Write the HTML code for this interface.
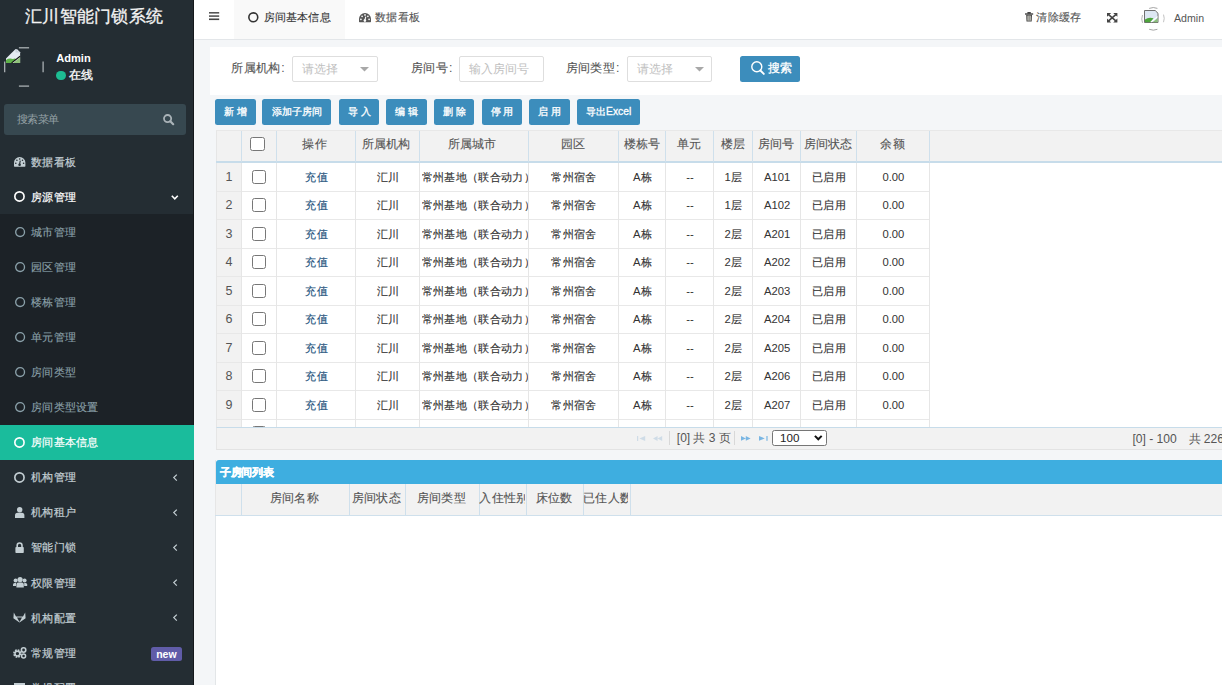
<!DOCTYPE html><html><head><meta charset="utf-8"><style>
*{box-sizing:border-box;margin:0;padding:0}
html,body{width:1222px;height:685px;overflow:hidden}
body{position:relative;background:#f4f6f8;font-family:"Liberation Sans",sans-serif;color:#333}
.a{position:absolute;white-space:nowrap}
.r{position:absolute}
</style></head><body>
<div class="r" style="left:0;top:0;width:194px;height:685px;background:#242d33"></div>
<div class="r" style="left:193px;top:0;width:1px;height:685px;background:#15191c"></div>
<div class="a" style="left:25.2px;top:3.00px;height:27.6px;line-height:27.6px;font-size:17.25px;color:#f4f4f4;font-weight:normal;letter-spacing:0.25px;-webkit-text-stroke:0.3px #f4f4f4;">汇川智能门锁系统</div>
<svg style="position:absolute;left:4px;top:47px;overflow:visible" width="40" height="40" viewBox="0 0 40 40"><path d="M14.9 0.8 L25.1 0.8" fill="none" stroke="#b4babd" stroke-width="1.2"/>
<path d="M14.9 39.1 L25.1 39.1" fill="none" stroke="#b4babd" stroke-width="1.2"/>
<path d="M0.7 14.6 L0.7 25.2" fill="none" stroke="#b4babd" stroke-width="1.2"/>
<path d="M39.1 14.6 L39.1 25.2" fill="none" stroke="#b4babd" stroke-width="1.2"/>
<path d="M2 15.9 L2 11.5 L11.3 2.2 L13.2 2.2 L16.1 5.2 L16.1 15.9 Z" fill="#e4ebf2"/>
<path d="M11.3 2.2 L11.6 5.4 L16.1 5.4" fill="#c9d3dc"/>
<path d="M2 15.9 L2 13 Q5 10.8 9 12 Q11 11 12.5 12.4 L8 15.9 Z" fill="#5fb24a"/>
<path d="M9 15.9 L16.1 10.5 L16.1 15.9 Z" fill="#8fc27a"/>
<path d="M7.6 15.9 L16.1 9.2" stroke="#111" stroke-width="1.1"/></svg>
<div class="a" style="left:56.2px;top:49.72px;height:17.76px;line-height:17.76px;font-size:11.1px;color:#ffffff;font-weight:bold;">Admin</div>
<div class="r" style="left:56.2px;top:70.8px;width:9.6px;height:9.6px;border-radius:50%;background:#1dbd93"></div>
<div class="a" style="left:68.6px;top:66.32px;height:18.56px;line-height:18.56px;font-size:11.6px;color:#ffffff;font-weight:normal;-webkit-text-stroke:0.3px #fff;">在线</div>
<div class="r" style="left:4px;top:104px;width:181.5px;height:31.3px;background:#374850;border-radius:3px"></div>
<div class="a" style="left:16.8px;top:111.20px;height:16.8px;line-height:16.8px;font-size:10.5px;color:#96a2a7;font-weight:normal;letter-spacing:-0.5px;">搜索菜单</div>
<svg style="position:absolute;left:163.4px;top:113.5px;overflow:visible" width="11" height="11" viewBox="0 0 11 11"><circle cx="4.6" cy="4.6" r="3.6" fill="none" stroke="#aab3b8" stroke-width="1.8"/><path d="M7.3 7.3 L10.2 10.2" stroke="#aab3b8" stroke-width="2.2" stroke-linecap="round"/></svg>
<div class="a" style="left:31.2px;top:152.60px;height:18.0px;line-height:18.0px;font-size:11.25px;color:#c3ced3;font-weight:normal;letter-spacing:0.25px;-webkit-text-stroke:0.2px #c3ced3;">数据看板</div>
<svg style="position:absolute;left:13.8px;top:156.9px;overflow:visible" width="11.4" height="9.7" viewBox="0 0 11.4 9.7"><path d="M0.6 9.7 Q0 9.7 0 9 L0 5.7 A5.7 5.7 0 0 1 11.4 5.7 L11.4 9 Q11.4 9.7 10.8 9.7 Z" fill="#c3ced3"/><circle cx="1.8" cy="6.2" r="0.8" fill="#242d33"/><circle cx="2.9" cy="3.3" r="0.8" fill="#242d33"/><circle cx="5.7" cy="2.0" r="0.8" fill="#242d33"/><circle cx="8.5" cy="3.3" r="0.8" fill="#242d33"/><circle cx="9.6" cy="6.2" r="0.8" fill="#242d33"/><path d="M5.5 7.6 L6.3 3.6" stroke="#242d33" stroke-width="1.1"/><circle cx="5.6" cy="7.7" r="1.3" fill="#242d33"/></svg>
<div class="a" style="left:31.2px;top:187.68px;height:18.0px;line-height:18.0px;font-size:11.25px;color:#ffffff;font-weight:normal;letter-spacing:0.25px;-webkit-text-stroke:0.2px #ffffff;">房源管理</div>
<svg style="position:absolute;left:14.0px;top:191.23000000000002px;overflow:visible" width="10.9" height="10.9" viewBox="0 0 10.9 10.9"><circle cx="5.45" cy="5.45" r="4.625" fill="none" stroke="#ffffff" stroke-width="1.65"/></svg>
<svg style="position:absolute;left:170.8px;top:195.08px;overflow:visible" width="7.6" height="4.8" viewBox="0 0 7.6 4.8"><path d="M0.8 0.8 L3.8 3.8 L6.8 0.8" fill="none" stroke="#ffffff" stroke-width="1.6"/></svg>
<div class="r" style="left:0;top:214.22px;width:193px;height:35.08px;background:#1c2227"></div>
<div class="a" style="left:31.2px;top:222.76px;height:18.0px;line-height:18.0px;font-size:11.25px;color:#8aa0a9;font-weight:normal;letter-spacing:0.25px;-webkit-text-stroke:0.12px #8aa0a9;">城市管理</div>
<svg style="position:absolute;left:15.1px;top:226.66px;overflow:visible" width="10.2" height="10.2" viewBox="0 0 10.2 10.2"><circle cx="5.1" cy="5.1" r="4.425" fill="none" stroke="#8aa0a9" stroke-width="1.35"/></svg>
<div class="r" style="left:0;top:249.30px;width:193px;height:35.08px;background:#1c2227"></div>
<div class="a" style="left:31.2px;top:257.84px;height:18.0px;line-height:18.0px;font-size:11.25px;color:#8aa0a9;font-weight:normal;letter-spacing:0.25px;-webkit-text-stroke:0.12px #8aa0a9;">园区管理</div>
<svg style="position:absolute;left:15.1px;top:261.73999999999995px;overflow:visible" width="10.2" height="10.2" viewBox="0 0 10.2 10.2"><circle cx="5.1" cy="5.1" r="4.425" fill="none" stroke="#8aa0a9" stroke-width="1.35"/></svg>
<div class="r" style="left:0;top:284.38px;width:193px;height:35.08px;background:#1c2227"></div>
<div class="a" style="left:31.2px;top:292.92px;height:18.0px;line-height:18.0px;font-size:11.25px;color:#8aa0a9;font-weight:normal;letter-spacing:0.25px;-webkit-text-stroke:0.12px #8aa0a9;">楼栋管理</div>
<svg style="position:absolute;left:15.1px;top:296.81999999999994px;overflow:visible" width="10.2" height="10.2" viewBox="0 0 10.2 10.2"><circle cx="5.1" cy="5.1" r="4.425" fill="none" stroke="#8aa0a9" stroke-width="1.35"/></svg>
<div class="r" style="left:0;top:319.46px;width:193px;height:35.08px;background:#1c2227"></div>
<div class="a" style="left:31.2px;top:328.00px;height:18.0px;line-height:18.0px;font-size:11.25px;color:#8aa0a9;font-weight:normal;letter-spacing:0.25px;-webkit-text-stroke:0.12px #8aa0a9;">单元管理</div>
<svg style="position:absolute;left:15.1px;top:331.9px;overflow:visible" width="10.2" height="10.2" viewBox="0 0 10.2 10.2"><circle cx="5.1" cy="5.1" r="4.425" fill="none" stroke="#8aa0a9" stroke-width="1.35"/></svg>
<div class="r" style="left:0;top:354.54px;width:193px;height:35.08px;background:#1c2227"></div>
<div class="a" style="left:31.2px;top:363.08px;height:18.0px;line-height:18.0px;font-size:11.25px;color:#8aa0a9;font-weight:normal;letter-spacing:0.25px;-webkit-text-stroke:0.12px #8aa0a9;">房间类型</div>
<svg style="position:absolute;left:15.1px;top:366.97999999999996px;overflow:visible" width="10.2" height="10.2" viewBox="0 0 10.2 10.2"><circle cx="5.1" cy="5.1" r="4.425" fill="none" stroke="#8aa0a9" stroke-width="1.35"/></svg>
<div class="r" style="left:0;top:389.62px;width:193px;height:35.08px;background:#1c2227"></div>
<div class="a" style="left:31.2px;top:398.16px;height:18.0px;line-height:18.0px;font-size:11.25px;color:#8aa0a9;font-weight:normal;letter-spacing:0.25px;-webkit-text-stroke:0.12px #8aa0a9;">房间类型设置</div>
<svg style="position:absolute;left:15.1px;top:402.05999999999995px;overflow:visible" width="10.2" height="10.2" viewBox="0 0 10.2 10.2"><circle cx="5.1" cy="5.1" r="4.425" fill="none" stroke="#8aa0a9" stroke-width="1.35"/></svg>
<div class="r" style="left:0;top:424.70px;width:194px;height:35.08px;background:#1abc9c"></div>
<div class="a" style="left:31.2px;top:433.24px;height:18.0px;line-height:18.0px;font-size:11.25px;color:#ffffff;font-weight:normal;letter-spacing:0.25px;-webkit-text-stroke:0.2px #ffffff;">房间基本信息</div>
<svg style="position:absolute;left:14.0px;top:436.79px;overflow:visible" width="10.9" height="10.9" viewBox="0 0 10.9 10.9"><circle cx="5.45" cy="5.45" r="4.625" fill="none" stroke="#ffffff" stroke-width="1.65"/></svg>
<div class="a" style="left:31.2px;top:468.32px;height:18.0px;line-height:18.0px;font-size:11.25px;color:#c3ced3;font-weight:normal;letter-spacing:0.25px;-webkit-text-stroke:0.2px #c3ced3;">机构管理</div>
<svg style="position:absolute;left:14.0px;top:471.86999999999995px;overflow:visible" width="10.9" height="10.9" viewBox="0 0 10.9 10.9"><circle cx="5.45" cy="5.45" r="4.625" fill="none" stroke="#c3ced3" stroke-width="1.65"/></svg>
<svg style="position:absolute;left:173.2px;top:473.91999999999996px;overflow:visible" width="4.4" height="7.2" viewBox="0 0 4.4 7.2"><path d="M3.8 0.6 L0.8 3.6 L3.8 6.6" fill="none" stroke="#c3ced3" stroke-width="1.25"/></svg>
<div class="a" style="left:31.2px;top:503.40px;height:18.0px;line-height:18.0px;font-size:11.25px;color:#c3ced3;font-weight:normal;letter-spacing:0.25px;-webkit-text-stroke:0.2px #c3ced3;">机构租户</div>
<svg style="position:absolute;left:14.8px;top:506.79999999999995px;overflow:visible" width="9.4" height="11" viewBox="0 0 9.4 11"><circle cx="4.7" cy="2.8" r="2.7" fill="#c3ced3"/><path d="M0 11 L0 8.4 Q0 5.8 2.6 5.8 L6.8 5.8 Q9.4 5.8 9.4 8.4 L9.4 11 Z" fill="#c3ced3"/></svg>
<svg style="position:absolute;left:173.2px;top:509.0px;overflow:visible" width="4.4" height="7.2" viewBox="0 0 4.4 7.2"><path d="M3.8 0.6 L0.8 3.6 L3.8 6.6" fill="none" stroke="#c3ced3" stroke-width="1.25"/></svg>
<div class="a" style="left:31.2px;top:538.48px;height:18.0px;line-height:18.0px;font-size:11.25px;color:#c3ced3;font-weight:normal;letter-spacing:0.25px;-webkit-text-stroke:0.2px #c3ced3;">智能门锁</div>
<svg style="position:absolute;left:15px;top:541.88px;overflow:visible" width="9.2" height="11" viewBox="0 0 9.2 11"><path d="M2.2 5 L2.2 3.4 A2.4 2.4 0 0 1 7 3.4 L7 5" fill="none" stroke="#c3ced3" stroke-width="1.6"/><rect x="0.4" y="5" width="8.4" height="6" rx="0.8" fill="#c3ced3"/></svg>
<svg style="position:absolute;left:173.2px;top:544.08px;overflow:visible" width="4.4" height="7.2" viewBox="0 0 4.4 7.2"><path d="M3.8 0.6 L0.8 3.6 L3.8 6.6" fill="none" stroke="#c3ced3" stroke-width="1.25"/></svg>
<div class="a" style="left:31.2px;top:573.56px;height:18.0px;line-height:18.0px;font-size:11.25px;color:#c3ced3;font-weight:normal;letter-spacing:0.25px;-webkit-text-stroke:0.2px #c3ced3;">权限管理</div>
<svg style="position:absolute;left:12.6px;top:577.16px;overflow:visible" width="14.2" height="10.6" viewBox="0 0 14.2 10.6"><circle cx="7.1" cy="2.6" r="2.6" fill="#c3ced3"/><path d="M3.4 10.6 L3.4 7.6 Q3.4 5.6 5.4 5.6 L8.8 5.6 Q10.8 5.6 10.8 7.6 L10.8 10.6 Z" fill="#c3ced3"/><circle cx="2.6" cy="3.6" r="2" fill="#c3ced3"/><circle cx="11.6" cy="3.6" r="2" fill="#c3ced3"/><path d="M0 9 L0 7.6 Q0 6 1.6 6 L3 6 L3 9 Z" fill="#c3ced3"/><path d="M14.2 9 L14.2 7.6 Q14.2 6 12.6 6 L11.2 6 L11.2 9 Z" fill="#c3ced3"/></svg>
<svg style="position:absolute;left:173.2px;top:579.16px;overflow:visible" width="4.4" height="7.2" viewBox="0 0 4.4 7.2"><path d="M3.8 0.6 L0.8 3.6 L3.8 6.6" fill="none" stroke="#c3ced3" stroke-width="1.25"/></svg>
<div class="a" style="left:31.2px;top:608.64px;height:18.0px;line-height:18.0px;font-size:11.25px;color:#c3ced3;font-weight:normal;letter-spacing:0.25px;-webkit-text-stroke:0.2px #c3ced3;">机构配置</div>
<svg style="position:absolute;left:12.8px;top:612.24px;overflow:visible" width="13" height="10.8" viewBox="0 0 13 10.8"><path d="M6.5 10.6 L0.4 6.2 L0.8 0.6 L3 4.6 L10 4.6 L12.2 0.6 L12.6 6.2 Z" fill="#c3ced3"/><path d="M6.5 10 L4 5.4 L9 5.4 Z" fill="#242d33"/></svg>
<svg style="position:absolute;left:173.2px;top:614.24px;overflow:visible" width="4.4" height="7.2" viewBox="0 0 4.4 7.2"><path d="M3.8 0.6 L0.8 3.6 L3.8 6.6" fill="none" stroke="#c3ced3" stroke-width="1.25"/></svg>
<div class="a" style="left:31.2px;top:643.72px;height:18.0px;line-height:18.0px;font-size:11.25px;color:#c3ced3;font-weight:normal;letter-spacing:0.25px;-webkit-text-stroke:0.2px #c3ced3;">常规管理</div>
<svg style="position:absolute;left:12.8px;top:646.9200000000001px;overflow:visible" width="13.6" height="11.4" viewBox="0 0 13.6 11.4"><circle cx="4.4" cy="6.6" r="3.2" fill="none" stroke="#c3ced3" stroke-width="2.2" stroke-dasharray="1.6 0.9"/><circle cx="4.4" cy="6.6" r="2.4" fill="none" stroke="#c3ced3" stroke-width="1.4"/><circle cx="10.6" cy="3" r="2.2" fill="none" stroke="#c3ced3" stroke-width="1.6"/><circle cx="10.6" cy="9" r="2" fill="none" stroke="#c3ced3" stroke-width="1.5"/></svg>
<div class="r" style="left:151.2px;top:646.92px;width:30.4px;height:14px;border-radius:2.5px;background:#605ca8;color:#fff;font-size:10.5px;font-weight:bold;line-height:14px;text-align:center">new</div>
<div class="a" style="left:31.2px;top:678.80px;height:18.0px;line-height:18.0px;font-size:11.25px;color:#c3ced3;font-weight:normal;letter-spacing:0.25px;-webkit-text-stroke:0.2px #c3ced3;">常规配置</div>
<svg style="position:absolute;left:14px;top:682.8px;overflow:visible" width="11" height="10" viewBox="0 0 11 10"><rect x="0" y="0" width="11" height="10" fill="#c3ced3"/></svg>
<div class="r" style="left:194px;top:0;width:1028px;height:39px;background:#fff"></div>
<div class="r" style="left:194px;top:39px;width:1028px;height:1px;background:#e3e6e9"></div>
<svg style="position:absolute;left:209px;top:12.1px;overflow:visible" width="10.2" height="8.2" viewBox="0 0 10.2 8.2"><rect x="0" y="0" width="10.2" height="1.6" fill="#555"/><rect x="0" y="3.3" width="10.2" height="1.6" fill="#555"/><rect x="0" y="6.5" width="10.2" height="1.6" fill="#444"/></svg>
<div class="r" style="left:234.4px;top:0;width:110.3px;height:39px;background:#f9f9f9"></div>
<svg style="position:absolute;left:248.2px;top:11.9px;overflow:visible" width="10.6" height="10.6" viewBox="0 0 10.6 10.6"><circle cx="5.3" cy="5.3" r="4.45" fill="none" stroke="#333" stroke-width="1.6"/></svg>
<div class="a" style="left:263.6px;top:7.60px;height:18.0px;line-height:18.0px;font-size:11.25px;color:#333;font-weight:normal;letter-spacing:0.2px;"><span style="-webkit-text-stroke:0.12px currentColor">房间基本信息</span></div>
<svg style="position:absolute;left:359.2px;top:12.8px;overflow:visible" width="12" height="9.2" viewBox="0 0 12 9.2"><path d="M0.6 9.2 Q0 9.2 0 8.6 L0 6 A6 6 0 0 1 12 6 L12 8.6 Q12 9.2 11.4 9.2 Z" fill="#555"/><circle cx="1.9" cy="6.3" r="0.85" fill="#fff"/><circle cx="3.1" cy="3.3" r="0.85" fill="#fff"/><circle cx="6" cy="1.9" r="0.85" fill="#fff"/><circle cx="8.9" cy="3.3" r="0.85" fill="#fff"/><circle cx="10.1" cy="6.3" r="0.85" fill="#fff"/><path d="M5.8 7.4 L6.8 3.6" stroke="#fff" stroke-width="1.1"/><circle cx="5.9" cy="7.6" r="1.3" fill="#fff"/></svg>
<div class="a" style="left:375.2px;top:7.80px;height:18.0px;line-height:18.0px;font-size:11.25px;color:#555;font-weight:normal;letter-spacing:0.25px;"><span style="-webkit-text-stroke:0.12px currentColor">数据看板</span></div>
<svg style="position:absolute;left:1024.5px;top:12.2px;overflow:visible" width="8.2" height="9.6" viewBox="0 0 8.2 9.6"><rect x="0" y="1.3" width="8.2" height="1.4" fill="#444"/><rect x="2.4" y="0" width="3.4" height="1.8" fill="#444"/><path d="M1.2 2.7 L1.5 9.6 L6.7 9.6 L7 2.7 Z" fill="#444"/><rect x="2.4" y="3.6" width="3.4" height="5.1" fill="#c9c9c0"/><rect x="3.7" y="3.6" width="0.8" height="5.1" fill="#666"/></svg>
<div class="a" style="left:1036.4px;top:7.80px;height:18.0px;line-height:18.0px;font-size:11.25px;color:#555;font-weight:normal;letter-spacing:0.22px;"><span style="-webkit-text-stroke:0.12px currentColor">清除缓存</span></div>
<svg style="position:absolute;left:1106.9px;top:12.7px;overflow:visible" width="10.4" height="9.4" viewBox="0 0 10.4 9.4"><path d="M1.6 1.6 L8.8 7.8 M8.8 1.6 L1.6 7.8" stroke="#444" stroke-width="1.6"/><path d="M0 0 L4.2 0 L0 3.8 Z M10.4 0 L6.2 0 L10.4 3.8 Z M0 9.4 L4.2 9.4 L0 5.6 Z M10.4 9.4 L6.2 9.4 L10.4 5.6 Z" fill="#444"/></svg>
<svg style="position:absolute;left:1142px;top:8px;overflow:visible" width="22" height="22" viewBox="0 0 22 22"><path d="M7.2 0.4 A10.5 10.5 0 0 1 15.4 0.4" fill="none" stroke="#9a9a9a" stroke-width="0.9"/>
<path d="M7.2 21.3 A10.5 10.5 0 0 0 15.4 21.3" fill="none" stroke="#9a9a9a" stroke-width="0.9"/>
<path d="M0.5 7 A10.5 10.5 0 0 0 0.5 14.8" fill="none" stroke="#aaa" stroke-width="0.9"/>
<path d="M21.5 6.6 A10.5 10.5 0 0 1 21.5 14.2" fill="none" stroke="#bbb" stroke-width="0.9"/>
<path d="M2.5 2.5 L13.2 2.5 L16 5.3 L16 14.5 L2.5 14.5 Z" fill="#dde7f3" stroke="#6f6f6f" stroke-width="1"/>
<path d="M3 14.2 L3 11.5 Q6.5 8.8 11.5 10.2 L8.5 14.2 Z" fill="#4ea53c"/>
<path d="M8.8 14.2 L15.6 8.6" stroke="#fff" stroke-width="1.1"/>
<path d="M10.5 14.2 L15.6 10.2 L15.6 14.2 Z" fill="#8bbf7a"/></svg>
<div class="a" style="left:1174px;top:9.62px;height:16.96px;line-height:16.96px;font-size:10.6px;color:#555;font-weight:normal;">Admin</div>
<div class="r" style="left:210px;top:47px;width:1012px;height:48px;background:#fff"></div>
<div class="a" style="left:231.3px;top:59.44px;height:19.52px;line-height:19.52px;font-size:12.2px;color:#555;font-weight:normal;letter-spacing:0.25px;"><span style="-webkit-text-stroke:0.12px currentColor">所属机构</span><span style="margin-left:1px">:</span></div>
<div class="r" style="left:292.2px;top:56.3px;width:85.5px;height:25.3px;border:1px solid #dedede;border-radius:2px;background:#fff"></div>
<div class="a" style="left:301.59999999999997px;top:59.64px;height:18.72px;line-height:18.72px;font-size:11.7px;color:#c0c0c0;font-weight:normal;">请选择</div>
<svg style="position:absolute;left:360.3px;top:67.0px;overflow:visible" width="9" height="4.6" viewBox="0 0 9 4.6"><path d="M0 0 L9 0 L4.5 4.6 Z" fill="#a8a8a8"/></svg>
<div class="a" style="left:411.2px;top:59.44px;height:19.52px;line-height:19.52px;font-size:12.2px;color:#555;font-weight:normal;letter-spacing:0.25px;"><span style="-webkit-text-stroke:0.12px currentColor">房间号</span><span style="margin-left:1px">:</span></div>
<div class="r" style="left:459.4px;top:56.3px;width:85.0px;height:25.3px;border:1px solid #dedede;border-radius:2px;background:#fff"></div>
<div class="a" style="left:468.79999999999995px;top:59.64px;height:18.72px;line-height:18.72px;font-size:11.7px;color:#c0c0c0;font-weight:normal;">输入房间号</div>
<div class="a" style="left:565.9px;top:59.44px;height:19.52px;line-height:19.52px;font-size:12.2px;color:#555;font-weight:normal;letter-spacing:0.25px;"><span style="-webkit-text-stroke:0.12px currentColor">房间类型</span><span style="margin-left:1px">:</span></div>
<div class="r" style="left:627.1px;top:56.3px;width:85.39999999999998px;height:25.3px;border:1px solid #dedede;border-radius:2px;background:#fff"></div>
<div class="a" style="left:636.5px;top:59.64px;height:18.72px;line-height:18.72px;font-size:11.7px;color:#c0c0c0;font-weight:normal;">请选择</div>
<svg style="position:absolute;left:695.1px;top:67.0px;overflow:visible" width="9" height="4.6" viewBox="0 0 9 4.6"><path d="M0 0 L9 0 L4.5 4.6 Z" fill="#a8a8a8"/></svg>
<div class="r" style="left:740px;top:56.2px;width:60.2px;height:25.4px;background:#3c8dbc;border-radius:2.5px"></div>
<svg style="position:absolute;left:750.5px;top:61px;overflow:visible" width="14" height="15" viewBox="0 0 14 15"><circle cx="5.8" cy="5.7" r="5.0" fill="none" stroke="#fff" stroke-width="1.4"/><path d="M9.4 9.5 L12.8 12.9" stroke="#fff" stroke-width="1.9" stroke-linecap="round"/></svg>
<div class="a" style="left:768.3px;top:58.56px;height:19.68px;line-height:19.68px;font-size:12.3px;color:#fff;font-weight:normal;-webkit-text-stroke:0.3px #fff;">搜索</div>
<div class="r" style="left:215.2px;top:99.3px;width:40.5px;height:25.4px;background:#3c8dbc;border-radius:2.5px;color:#fff;font-size:10.3px;-webkit-text-stroke:0.3px #fff;line-height:25.4px;text-align:center;white-space:nowrap">新 增</div>
<div class="r" style="left:262.2px;top:99.3px;width:69.2px;height:25.4px;background:#3c8dbc;border-radius:2.5px;color:#fff;font-size:10.3px;-webkit-text-stroke:0.3px #fff;line-height:25.4px;text-align:center;white-space:nowrap">添加子房间</div>
<div class="r" style="left:339px;top:99.3px;width:40.2px;height:25.4px;background:#3c8dbc;border-radius:2.5px;color:#fff;font-size:10.3px;-webkit-text-stroke:0.3px #fff;line-height:25.4px;text-align:center;white-space:nowrap">导 入</div>
<div class="r" style="left:386px;top:99.3px;width:40.8px;height:25.4px;background:#3c8dbc;border-radius:2.5px;color:#fff;font-size:10.3px;-webkit-text-stroke:0.3px #fff;line-height:25.4px;text-align:center;white-space:nowrap">编 辑</div>
<div class="r" style="left:434px;top:99.3px;width:40.3px;height:25.4px;background:#3c8dbc;border-radius:2.5px;color:#fff;font-size:10.3px;-webkit-text-stroke:0.3px #fff;line-height:25.4px;text-align:center;white-space:nowrap">删 除</div>
<div class="r" style="left:481.9px;top:99.3px;width:40.3px;height:25.4px;background:#3c8dbc;border-radius:2.5px;color:#fff;font-size:10.3px;-webkit-text-stroke:0.3px #fff;line-height:25.4px;text-align:center;white-space:nowrap">停 用</div>
<div class="r" style="left:529px;top:99.3px;width:41.0px;height:25.4px;background:#3c8dbc;border-radius:2.5px;color:#fff;font-size:10.3px;-webkit-text-stroke:0.3px #fff;line-height:25.4px;text-align:center;white-space:nowrap">启 用</div>
<div class="r" style="left:577px;top:99.3px;width:63.3px;height:25.4px;background:#3c8dbc;border-radius:2.5px;color:#fff;font-size:10.3px;-webkit-text-stroke:0.3px #fff;line-height:25.4px;text-align:center;white-space:nowrap">导出Excel</div>
<div class="r" style="left:215.6px;top:130px;width:1006.4px;height:297.5px;background:#fff;border-left:1px solid #e6e6e6"></div>
<div class="r" style="left:215.6px;top:130px;width:1006.4px;height:32.5px;background:#f2f2f2;border-top:1px solid #e8e8e8;border-left:1px solid #e6e6e6"></div>
<div class="r" style="left:215.6px;top:161.3px;width:1006.4px;height:1.3px;background:#c7dcea"></div>
<div class="r" style="left:216.6px;top:162.6px;width:24.8px;height:265px;background:#f2f2f2"></div>
<div class="r" style="left:240.9px;top:131px;width:1px;height:30.5px;background:#cfe0ec"></div>
<div class="r" style="left:276.0px;top:131px;width:1px;height:30.5px;background:#cfe0ec"></div>
<div class="r" style="left:355.1px;top:131px;width:1px;height:30.5px;background:#cfe0ec"></div>
<div class="r" style="left:419.2px;top:131px;width:1px;height:30.5px;background:#cfe0ec"></div>
<div class="r" style="left:527.5px;top:131px;width:1px;height:30.5px;background:#cfe0ec"></div>
<div class="r" style="left:618.2px;top:131px;width:1px;height:30.5px;background:#cfe0ec"></div>
<div class="r" style="left:664.9px;top:131px;width:1px;height:30.5px;background:#cfe0ec"></div>
<div class="r" style="left:712.9px;top:131px;width:1px;height:30.5px;background:#cfe0ec"></div>
<div class="r" style="left:752.1px;top:131px;width:1px;height:30.5px;background:#cfe0ec"></div>
<div class="r" style="left:800.1px;top:131px;width:1px;height:30.5px;background:#cfe0ec"></div>
<div class="r" style="left:855.8px;top:131px;width:1px;height:30.5px;background:#cfe0ec"></div>
<div class="r" style="left:929.1px;top:131px;width:1px;height:30.5px;background:#cfe0ec"></div>
<div class="a" style="left:275.0px;top:135.14px;height:19.52px;line-height:19.52px;font-size:12.2px;color:#555;font-weight:normal;width:79.10000000000002px;letter-spacing:0.15px;text-align:center;overflow:hidden;"><span style="-webkit-text-stroke:0.12px currentColor">操作</span></div>
<div class="a" style="left:354.1px;top:135.14px;height:19.52px;line-height:19.52px;font-size:12.2px;color:#555;font-weight:normal;width:64.09999999999997px;letter-spacing:0.15px;text-align:center;overflow:hidden;"><span style="-webkit-text-stroke:0.12px currentColor">所属机构</span></div>
<div class="a" style="left:418.2px;top:135.14px;height:19.52px;line-height:19.52px;font-size:12.2px;color:#555;font-weight:normal;width:108.30000000000001px;letter-spacing:0.15px;text-align:center;overflow:hidden;"><span style="-webkit-text-stroke:0.12px currentColor">所属城市</span></div>
<div class="a" style="left:527.7px;top:135.14px;height:19.52px;line-height:19.52px;font-size:12.2px;color:#555;font-weight:normal;width:90.70000000000005px;letter-spacing:0.15px;text-align:center;overflow:hidden;"><span style="-webkit-text-stroke:0.12px currentColor">园区</span></div>
<div class="a" style="left:618.4000000000001px;top:135.14px;height:19.52px;line-height:19.52px;font-size:12.2px;color:#555;font-weight:normal;width:46.69999999999993px;letter-spacing:0.15px;text-align:center;overflow:hidden;"><span style="-webkit-text-stroke:0.12px currentColor">楼栋号</span></div>
<div class="a" style="left:665.1px;top:135.14px;height:19.52px;line-height:19.52px;font-size:12.2px;color:#555;font-weight:normal;width:48.0px;letter-spacing:0.15px;text-align:center;overflow:hidden;"><span style="-webkit-text-stroke:0.12px currentColor">单元</span></div>
<div class="a" style="left:713.1px;top:135.14px;height:19.52px;line-height:19.52px;font-size:12.2px;color:#555;font-weight:normal;width:39.200000000000045px;letter-spacing:0.15px;text-align:center;overflow:hidden;"><span style="-webkit-text-stroke:0.12px currentColor">楼层</span></div>
<div class="a" style="left:752.3000000000001px;top:135.14px;height:19.52px;line-height:19.52px;font-size:12.2px;color:#555;font-weight:normal;width:48.0px;letter-spacing:0.15px;text-align:center;overflow:hidden;"><span style="-webkit-text-stroke:0.12px currentColor">房间号</span></div>
<div class="a" style="left:800.3000000000001px;top:135.14px;height:19.52px;line-height:19.52px;font-size:12.2px;color:#555;font-weight:normal;width:55.69999999999993px;letter-spacing:0.15px;text-align:center;overflow:hidden;"><span style="-webkit-text-stroke:0.12px currentColor">房间状态</span></div>
<div class="a" style="left:856.0px;top:135.14px;height:19.52px;line-height:19.52px;font-size:12.2px;color:#555;font-weight:normal;width:73.30000000000007px;letter-spacing:0.15px;text-align:center;overflow:hidden;"><span style="-webkit-text-stroke:0.12px currentColor">余额</span></div>
<div class="r" style="left:250.3px;top:136.6px;width:14.4px;height:14.4px;border:1px solid #777;border-radius:2.5px;background:#fff"></div>
<div class="r" style="left:216.6px;top:190.50px;width:713.0px;height:1px;background:#e8e8e8"></div>
<div class="r" style="left:252px;top:169.55px;width:14.4px;height:14.4px;border:1px solid #777;border-radius:2.5px;background:#fff"></div>
<div class="a" style="left:215.6px;top:166.75px;height:20.0px;line-height:20.0px;font-size:12.5px;color:#555;font-weight:normal;width:26.80000000000001px;text-align:center;">1</div>
<div class="a" style="left:277.5px;top:167.75px;height:18.0px;line-height:18.0px;font-size:11.25px;color:#23527c;font-weight:normal;width:78.10000000000002px;letter-spacing:0.25px;text-align:center;overflow:hidden;"><span style="-webkit-text-stroke:0.15px currentColor">充值</span></div>
<div class="a" style="left:356.6px;top:167.75px;height:18.0px;line-height:18.0px;font-size:11.25px;color:#333;font-weight:normal;width:63.099999999999966px;letter-spacing:0.25px;text-align:center;overflow:hidden;"><span style="-webkit-text-stroke:0.15px currentColor">汇川</span></div>
<div class="a" style="left:421.9px;top:167.75px;height:18.0px;line-height:18.0px;font-size:11.25px;color:#333;font-weight:normal;width:106.10000000000001px;letter-spacing:0.3px;overflow:hidden;"><span style="-webkit-text-stroke:0.15px currentColor">常州基地（联合动力）</span></div>
<div class="a" style="left:529px;top:167.75px;height:18.0px;line-height:18.0px;font-size:11.25px;color:#333;font-weight:normal;width:89.70000000000005px;letter-spacing:0.25px;text-align:center;overflow:hidden;"><span style="-webkit-text-stroke:0.15px currentColor">常州宿舍</span></div>
<div class="a" style="left:619.7px;top:167.75px;height:18.0px;line-height:18.0px;font-size:11.25px;color:#333;font-weight:normal;width:45.69999999999993px;letter-spacing:0.25px;text-align:center;overflow:hidden;">A<span style="-webkit-text-stroke:0.15px currentColor">栋</span></div>
<div class="a" style="left:666.4px;top:167.75px;height:18.0px;line-height:18.0px;font-size:11.25px;color:#333;font-weight:normal;width:47.0px;letter-spacing:0px;text-align:center;overflow:hidden;">--</div>
<div class="a" style="left:714.4px;top:167.75px;height:18.0px;line-height:18.0px;font-size:11.25px;color:#333;font-weight:normal;width:38.200000000000045px;letter-spacing:0.25px;text-align:center;overflow:hidden;">1<span style="-webkit-text-stroke:0.15px currentColor">层</span></div>
<div class="a" style="left:753.6px;top:167.75px;height:18.0px;line-height:18.0px;font-size:11.25px;color:#333;font-weight:normal;width:47.0px;letter-spacing:0px;text-align:center;overflow:hidden;">A101</div>
<div class="a" style="left:801.6px;top:167.75px;height:18.0px;line-height:18.0px;font-size:11.25px;color:#333;font-weight:normal;width:54.69999999999993px;letter-spacing:0.25px;text-align:center;overflow:hidden;"><span style="-webkit-text-stroke:0.15px currentColor">已启用</span></div>
<div class="a" style="left:857.3px;top:167.75px;height:18.0px;line-height:18.0px;font-size:11.25px;color:#333;font-weight:normal;width:72.30000000000007px;letter-spacing:0px;text-align:center;overflow:hidden;">0.00</div>
<div class="r" style="left:216.6px;top:219.00px;width:713.0px;height:1px;background:#e8e8e8"></div>
<div class="r" style="left:252px;top:198.05px;width:14.4px;height:14.4px;border:1px solid #777;border-radius:2.5px;background:#fff"></div>
<div class="a" style="left:215.6px;top:195.25px;height:20.0px;line-height:20.0px;font-size:12.5px;color:#555;font-weight:normal;width:26.80000000000001px;text-align:center;">2</div>
<div class="a" style="left:277.5px;top:196.25px;height:18.0px;line-height:18.0px;font-size:11.25px;color:#23527c;font-weight:normal;width:78.10000000000002px;letter-spacing:0.25px;text-align:center;overflow:hidden;"><span style="-webkit-text-stroke:0.15px currentColor">充值</span></div>
<div class="a" style="left:356.6px;top:196.25px;height:18.0px;line-height:18.0px;font-size:11.25px;color:#333;font-weight:normal;width:63.099999999999966px;letter-spacing:0.25px;text-align:center;overflow:hidden;"><span style="-webkit-text-stroke:0.15px currentColor">汇川</span></div>
<div class="a" style="left:421.9px;top:196.25px;height:18.0px;line-height:18.0px;font-size:11.25px;color:#333;font-weight:normal;width:106.10000000000001px;letter-spacing:0.3px;overflow:hidden;"><span style="-webkit-text-stroke:0.15px currentColor">常州基地（联合动力）</span></div>
<div class="a" style="left:529px;top:196.25px;height:18.0px;line-height:18.0px;font-size:11.25px;color:#333;font-weight:normal;width:89.70000000000005px;letter-spacing:0.25px;text-align:center;overflow:hidden;"><span style="-webkit-text-stroke:0.15px currentColor">常州宿舍</span></div>
<div class="a" style="left:619.7px;top:196.25px;height:18.0px;line-height:18.0px;font-size:11.25px;color:#333;font-weight:normal;width:45.69999999999993px;letter-spacing:0.25px;text-align:center;overflow:hidden;">A<span style="-webkit-text-stroke:0.15px currentColor">栋</span></div>
<div class="a" style="left:666.4px;top:196.25px;height:18.0px;line-height:18.0px;font-size:11.25px;color:#333;font-weight:normal;width:47.0px;letter-spacing:0px;text-align:center;overflow:hidden;">--</div>
<div class="a" style="left:714.4px;top:196.25px;height:18.0px;line-height:18.0px;font-size:11.25px;color:#333;font-weight:normal;width:38.200000000000045px;letter-spacing:0.25px;text-align:center;overflow:hidden;">1<span style="-webkit-text-stroke:0.15px currentColor">层</span></div>
<div class="a" style="left:753.6px;top:196.25px;height:18.0px;line-height:18.0px;font-size:11.25px;color:#333;font-weight:normal;width:47.0px;letter-spacing:0px;text-align:center;overflow:hidden;">A102</div>
<div class="a" style="left:801.6px;top:196.25px;height:18.0px;line-height:18.0px;font-size:11.25px;color:#333;font-weight:normal;width:54.69999999999993px;letter-spacing:0.25px;text-align:center;overflow:hidden;"><span style="-webkit-text-stroke:0.15px currentColor">已启用</span></div>
<div class="a" style="left:857.3px;top:196.25px;height:18.0px;line-height:18.0px;font-size:11.25px;color:#333;font-weight:normal;width:72.30000000000007px;letter-spacing:0px;text-align:center;overflow:hidden;">0.00</div>
<div class="r" style="left:216.6px;top:247.50px;width:713.0px;height:1px;background:#e8e8e8"></div>
<div class="r" style="left:252px;top:226.55px;width:14.4px;height:14.4px;border:1px solid #777;border-radius:2.5px;background:#fff"></div>
<div class="a" style="left:215.6px;top:223.75px;height:20.0px;line-height:20.0px;font-size:12.5px;color:#555;font-weight:normal;width:26.80000000000001px;text-align:center;">3</div>
<div class="a" style="left:277.5px;top:224.75px;height:18.0px;line-height:18.0px;font-size:11.25px;color:#23527c;font-weight:normal;width:78.10000000000002px;letter-spacing:0.25px;text-align:center;overflow:hidden;"><span style="-webkit-text-stroke:0.15px currentColor">充值</span></div>
<div class="a" style="left:356.6px;top:224.75px;height:18.0px;line-height:18.0px;font-size:11.25px;color:#333;font-weight:normal;width:63.099999999999966px;letter-spacing:0.25px;text-align:center;overflow:hidden;"><span style="-webkit-text-stroke:0.15px currentColor">汇川</span></div>
<div class="a" style="left:421.9px;top:224.75px;height:18.0px;line-height:18.0px;font-size:11.25px;color:#333;font-weight:normal;width:106.10000000000001px;letter-spacing:0.3px;overflow:hidden;"><span style="-webkit-text-stroke:0.15px currentColor">常州基地（联合动力）</span></div>
<div class="a" style="left:529px;top:224.75px;height:18.0px;line-height:18.0px;font-size:11.25px;color:#333;font-weight:normal;width:89.70000000000005px;letter-spacing:0.25px;text-align:center;overflow:hidden;"><span style="-webkit-text-stroke:0.15px currentColor">常州宿舍</span></div>
<div class="a" style="left:619.7px;top:224.75px;height:18.0px;line-height:18.0px;font-size:11.25px;color:#333;font-weight:normal;width:45.69999999999993px;letter-spacing:0.25px;text-align:center;overflow:hidden;">A<span style="-webkit-text-stroke:0.15px currentColor">栋</span></div>
<div class="a" style="left:666.4px;top:224.75px;height:18.0px;line-height:18.0px;font-size:11.25px;color:#333;font-weight:normal;width:47.0px;letter-spacing:0px;text-align:center;overflow:hidden;">--</div>
<div class="a" style="left:714.4px;top:224.75px;height:18.0px;line-height:18.0px;font-size:11.25px;color:#333;font-weight:normal;width:38.200000000000045px;letter-spacing:0.25px;text-align:center;overflow:hidden;">2<span style="-webkit-text-stroke:0.15px currentColor">层</span></div>
<div class="a" style="left:753.6px;top:224.75px;height:18.0px;line-height:18.0px;font-size:11.25px;color:#333;font-weight:normal;width:47.0px;letter-spacing:0px;text-align:center;overflow:hidden;">A201</div>
<div class="a" style="left:801.6px;top:224.75px;height:18.0px;line-height:18.0px;font-size:11.25px;color:#333;font-weight:normal;width:54.69999999999993px;letter-spacing:0.25px;text-align:center;overflow:hidden;"><span style="-webkit-text-stroke:0.15px currentColor">已启用</span></div>
<div class="a" style="left:857.3px;top:224.75px;height:18.0px;line-height:18.0px;font-size:11.25px;color:#333;font-weight:normal;width:72.30000000000007px;letter-spacing:0px;text-align:center;overflow:hidden;">0.00</div>
<div class="r" style="left:216.6px;top:276.00px;width:713.0px;height:1px;background:#e8e8e8"></div>
<div class="r" style="left:252px;top:255.05px;width:14.4px;height:14.4px;border:1px solid #777;border-radius:2.5px;background:#fff"></div>
<div class="a" style="left:215.6px;top:252.25px;height:20.0px;line-height:20.0px;font-size:12.5px;color:#555;font-weight:normal;width:26.80000000000001px;text-align:center;">4</div>
<div class="a" style="left:277.5px;top:253.25px;height:18.0px;line-height:18.0px;font-size:11.25px;color:#23527c;font-weight:normal;width:78.10000000000002px;letter-spacing:0.25px;text-align:center;overflow:hidden;"><span style="-webkit-text-stroke:0.15px currentColor">充值</span></div>
<div class="a" style="left:356.6px;top:253.25px;height:18.0px;line-height:18.0px;font-size:11.25px;color:#333;font-weight:normal;width:63.099999999999966px;letter-spacing:0.25px;text-align:center;overflow:hidden;"><span style="-webkit-text-stroke:0.15px currentColor">汇川</span></div>
<div class="a" style="left:421.9px;top:253.25px;height:18.0px;line-height:18.0px;font-size:11.25px;color:#333;font-weight:normal;width:106.10000000000001px;letter-spacing:0.3px;overflow:hidden;"><span style="-webkit-text-stroke:0.15px currentColor">常州基地（联合动力）</span></div>
<div class="a" style="left:529px;top:253.25px;height:18.0px;line-height:18.0px;font-size:11.25px;color:#333;font-weight:normal;width:89.70000000000005px;letter-spacing:0.25px;text-align:center;overflow:hidden;"><span style="-webkit-text-stroke:0.15px currentColor">常州宿舍</span></div>
<div class="a" style="left:619.7px;top:253.25px;height:18.0px;line-height:18.0px;font-size:11.25px;color:#333;font-weight:normal;width:45.69999999999993px;letter-spacing:0.25px;text-align:center;overflow:hidden;">A<span style="-webkit-text-stroke:0.15px currentColor">栋</span></div>
<div class="a" style="left:666.4px;top:253.25px;height:18.0px;line-height:18.0px;font-size:11.25px;color:#333;font-weight:normal;width:47.0px;letter-spacing:0px;text-align:center;overflow:hidden;">--</div>
<div class="a" style="left:714.4px;top:253.25px;height:18.0px;line-height:18.0px;font-size:11.25px;color:#333;font-weight:normal;width:38.200000000000045px;letter-spacing:0.25px;text-align:center;overflow:hidden;">2<span style="-webkit-text-stroke:0.15px currentColor">层</span></div>
<div class="a" style="left:753.6px;top:253.25px;height:18.0px;line-height:18.0px;font-size:11.25px;color:#333;font-weight:normal;width:47.0px;letter-spacing:0px;text-align:center;overflow:hidden;">A202</div>
<div class="a" style="left:801.6px;top:253.25px;height:18.0px;line-height:18.0px;font-size:11.25px;color:#333;font-weight:normal;width:54.69999999999993px;letter-spacing:0.25px;text-align:center;overflow:hidden;"><span style="-webkit-text-stroke:0.15px currentColor">已启用</span></div>
<div class="a" style="left:857.3px;top:253.25px;height:18.0px;line-height:18.0px;font-size:11.25px;color:#333;font-weight:normal;width:72.30000000000007px;letter-spacing:0px;text-align:center;overflow:hidden;">0.00</div>
<div class="r" style="left:216.6px;top:304.50px;width:713.0px;height:1px;background:#e8e8e8"></div>
<div class="r" style="left:252px;top:283.55px;width:14.4px;height:14.4px;border:1px solid #777;border-radius:2.5px;background:#fff"></div>
<div class="a" style="left:215.6px;top:280.75px;height:20.0px;line-height:20.0px;font-size:12.5px;color:#555;font-weight:normal;width:26.80000000000001px;text-align:center;">5</div>
<div class="a" style="left:277.5px;top:281.75px;height:18.0px;line-height:18.0px;font-size:11.25px;color:#23527c;font-weight:normal;width:78.10000000000002px;letter-spacing:0.25px;text-align:center;overflow:hidden;"><span style="-webkit-text-stroke:0.15px currentColor">充值</span></div>
<div class="a" style="left:356.6px;top:281.75px;height:18.0px;line-height:18.0px;font-size:11.25px;color:#333;font-weight:normal;width:63.099999999999966px;letter-spacing:0.25px;text-align:center;overflow:hidden;"><span style="-webkit-text-stroke:0.15px currentColor">汇川</span></div>
<div class="a" style="left:421.9px;top:281.75px;height:18.0px;line-height:18.0px;font-size:11.25px;color:#333;font-weight:normal;width:106.10000000000001px;letter-spacing:0.3px;overflow:hidden;"><span style="-webkit-text-stroke:0.15px currentColor">常州基地（联合动力）</span></div>
<div class="a" style="left:529px;top:281.75px;height:18.0px;line-height:18.0px;font-size:11.25px;color:#333;font-weight:normal;width:89.70000000000005px;letter-spacing:0.25px;text-align:center;overflow:hidden;"><span style="-webkit-text-stroke:0.15px currentColor">常州宿舍</span></div>
<div class="a" style="left:619.7px;top:281.75px;height:18.0px;line-height:18.0px;font-size:11.25px;color:#333;font-weight:normal;width:45.69999999999993px;letter-spacing:0.25px;text-align:center;overflow:hidden;">A<span style="-webkit-text-stroke:0.15px currentColor">栋</span></div>
<div class="a" style="left:666.4px;top:281.75px;height:18.0px;line-height:18.0px;font-size:11.25px;color:#333;font-weight:normal;width:47.0px;letter-spacing:0px;text-align:center;overflow:hidden;">--</div>
<div class="a" style="left:714.4px;top:281.75px;height:18.0px;line-height:18.0px;font-size:11.25px;color:#333;font-weight:normal;width:38.200000000000045px;letter-spacing:0.25px;text-align:center;overflow:hidden;">2<span style="-webkit-text-stroke:0.15px currentColor">层</span></div>
<div class="a" style="left:753.6px;top:281.75px;height:18.0px;line-height:18.0px;font-size:11.25px;color:#333;font-weight:normal;width:47.0px;letter-spacing:0px;text-align:center;overflow:hidden;">A203</div>
<div class="a" style="left:801.6px;top:281.75px;height:18.0px;line-height:18.0px;font-size:11.25px;color:#333;font-weight:normal;width:54.69999999999993px;letter-spacing:0.25px;text-align:center;overflow:hidden;"><span style="-webkit-text-stroke:0.15px currentColor">已启用</span></div>
<div class="a" style="left:857.3px;top:281.75px;height:18.0px;line-height:18.0px;font-size:11.25px;color:#333;font-weight:normal;width:72.30000000000007px;letter-spacing:0px;text-align:center;overflow:hidden;">0.00</div>
<div class="r" style="left:216.6px;top:333.00px;width:713.0px;height:1px;background:#e8e8e8"></div>
<div class="r" style="left:252px;top:312.05px;width:14.4px;height:14.4px;border:1px solid #777;border-radius:2.5px;background:#fff"></div>
<div class="a" style="left:215.6px;top:309.25px;height:20.0px;line-height:20.0px;font-size:12.5px;color:#555;font-weight:normal;width:26.80000000000001px;text-align:center;">6</div>
<div class="a" style="left:277.5px;top:310.25px;height:18.0px;line-height:18.0px;font-size:11.25px;color:#23527c;font-weight:normal;width:78.10000000000002px;letter-spacing:0.25px;text-align:center;overflow:hidden;"><span style="-webkit-text-stroke:0.15px currentColor">充值</span></div>
<div class="a" style="left:356.6px;top:310.25px;height:18.0px;line-height:18.0px;font-size:11.25px;color:#333;font-weight:normal;width:63.099999999999966px;letter-spacing:0.25px;text-align:center;overflow:hidden;"><span style="-webkit-text-stroke:0.15px currentColor">汇川</span></div>
<div class="a" style="left:421.9px;top:310.25px;height:18.0px;line-height:18.0px;font-size:11.25px;color:#333;font-weight:normal;width:106.10000000000001px;letter-spacing:0.3px;overflow:hidden;"><span style="-webkit-text-stroke:0.15px currentColor">常州基地（联合动力）</span></div>
<div class="a" style="left:529px;top:310.25px;height:18.0px;line-height:18.0px;font-size:11.25px;color:#333;font-weight:normal;width:89.70000000000005px;letter-spacing:0.25px;text-align:center;overflow:hidden;"><span style="-webkit-text-stroke:0.15px currentColor">常州宿舍</span></div>
<div class="a" style="left:619.7px;top:310.25px;height:18.0px;line-height:18.0px;font-size:11.25px;color:#333;font-weight:normal;width:45.69999999999993px;letter-spacing:0.25px;text-align:center;overflow:hidden;">A<span style="-webkit-text-stroke:0.15px currentColor">栋</span></div>
<div class="a" style="left:666.4px;top:310.25px;height:18.0px;line-height:18.0px;font-size:11.25px;color:#333;font-weight:normal;width:47.0px;letter-spacing:0px;text-align:center;overflow:hidden;">--</div>
<div class="a" style="left:714.4px;top:310.25px;height:18.0px;line-height:18.0px;font-size:11.25px;color:#333;font-weight:normal;width:38.200000000000045px;letter-spacing:0.25px;text-align:center;overflow:hidden;">2<span style="-webkit-text-stroke:0.15px currentColor">层</span></div>
<div class="a" style="left:753.6px;top:310.25px;height:18.0px;line-height:18.0px;font-size:11.25px;color:#333;font-weight:normal;width:47.0px;letter-spacing:0px;text-align:center;overflow:hidden;">A204</div>
<div class="a" style="left:801.6px;top:310.25px;height:18.0px;line-height:18.0px;font-size:11.25px;color:#333;font-weight:normal;width:54.69999999999993px;letter-spacing:0.25px;text-align:center;overflow:hidden;"><span style="-webkit-text-stroke:0.15px currentColor">已启用</span></div>
<div class="a" style="left:857.3px;top:310.25px;height:18.0px;line-height:18.0px;font-size:11.25px;color:#333;font-weight:normal;width:72.30000000000007px;letter-spacing:0px;text-align:center;overflow:hidden;">0.00</div>
<div class="r" style="left:216.6px;top:361.50px;width:713.0px;height:1px;background:#e8e8e8"></div>
<div class="r" style="left:252px;top:340.55px;width:14.4px;height:14.4px;border:1px solid #777;border-radius:2.5px;background:#fff"></div>
<div class="a" style="left:215.6px;top:337.75px;height:20.0px;line-height:20.0px;font-size:12.5px;color:#555;font-weight:normal;width:26.80000000000001px;text-align:center;">7</div>
<div class="a" style="left:277.5px;top:338.75px;height:18.0px;line-height:18.0px;font-size:11.25px;color:#23527c;font-weight:normal;width:78.10000000000002px;letter-spacing:0.25px;text-align:center;overflow:hidden;"><span style="-webkit-text-stroke:0.15px currentColor">充值</span></div>
<div class="a" style="left:356.6px;top:338.75px;height:18.0px;line-height:18.0px;font-size:11.25px;color:#333;font-weight:normal;width:63.099999999999966px;letter-spacing:0.25px;text-align:center;overflow:hidden;"><span style="-webkit-text-stroke:0.15px currentColor">汇川</span></div>
<div class="a" style="left:421.9px;top:338.75px;height:18.0px;line-height:18.0px;font-size:11.25px;color:#333;font-weight:normal;width:106.10000000000001px;letter-spacing:0.3px;overflow:hidden;"><span style="-webkit-text-stroke:0.15px currentColor">常州基地（联合动力）</span></div>
<div class="a" style="left:529px;top:338.75px;height:18.0px;line-height:18.0px;font-size:11.25px;color:#333;font-weight:normal;width:89.70000000000005px;letter-spacing:0.25px;text-align:center;overflow:hidden;"><span style="-webkit-text-stroke:0.15px currentColor">常州宿舍</span></div>
<div class="a" style="left:619.7px;top:338.75px;height:18.0px;line-height:18.0px;font-size:11.25px;color:#333;font-weight:normal;width:45.69999999999993px;letter-spacing:0.25px;text-align:center;overflow:hidden;">A<span style="-webkit-text-stroke:0.15px currentColor">栋</span></div>
<div class="a" style="left:666.4px;top:338.75px;height:18.0px;line-height:18.0px;font-size:11.25px;color:#333;font-weight:normal;width:47.0px;letter-spacing:0px;text-align:center;overflow:hidden;">--</div>
<div class="a" style="left:714.4px;top:338.75px;height:18.0px;line-height:18.0px;font-size:11.25px;color:#333;font-weight:normal;width:38.200000000000045px;letter-spacing:0.25px;text-align:center;overflow:hidden;">2<span style="-webkit-text-stroke:0.15px currentColor">层</span></div>
<div class="a" style="left:753.6px;top:338.75px;height:18.0px;line-height:18.0px;font-size:11.25px;color:#333;font-weight:normal;width:47.0px;letter-spacing:0px;text-align:center;overflow:hidden;">A205</div>
<div class="a" style="left:801.6px;top:338.75px;height:18.0px;line-height:18.0px;font-size:11.25px;color:#333;font-weight:normal;width:54.69999999999993px;letter-spacing:0.25px;text-align:center;overflow:hidden;"><span style="-webkit-text-stroke:0.15px currentColor">已启用</span></div>
<div class="a" style="left:857.3px;top:338.75px;height:18.0px;line-height:18.0px;font-size:11.25px;color:#333;font-weight:normal;width:72.30000000000007px;letter-spacing:0px;text-align:center;overflow:hidden;">0.00</div>
<div class="r" style="left:216.6px;top:390.00px;width:713.0px;height:1px;background:#e8e8e8"></div>
<div class="r" style="left:252px;top:369.05px;width:14.4px;height:14.4px;border:1px solid #777;border-radius:2.5px;background:#fff"></div>
<div class="a" style="left:215.6px;top:366.25px;height:20.0px;line-height:20.0px;font-size:12.5px;color:#555;font-weight:normal;width:26.80000000000001px;text-align:center;">8</div>
<div class="a" style="left:277.5px;top:367.25px;height:18.0px;line-height:18.0px;font-size:11.25px;color:#23527c;font-weight:normal;width:78.10000000000002px;letter-spacing:0.25px;text-align:center;overflow:hidden;"><span style="-webkit-text-stroke:0.15px currentColor">充值</span></div>
<div class="a" style="left:356.6px;top:367.25px;height:18.0px;line-height:18.0px;font-size:11.25px;color:#333;font-weight:normal;width:63.099999999999966px;letter-spacing:0.25px;text-align:center;overflow:hidden;"><span style="-webkit-text-stroke:0.15px currentColor">汇川</span></div>
<div class="a" style="left:421.9px;top:367.25px;height:18.0px;line-height:18.0px;font-size:11.25px;color:#333;font-weight:normal;width:106.10000000000001px;letter-spacing:0.3px;overflow:hidden;"><span style="-webkit-text-stroke:0.15px currentColor">常州基地（联合动力）</span></div>
<div class="a" style="left:529px;top:367.25px;height:18.0px;line-height:18.0px;font-size:11.25px;color:#333;font-weight:normal;width:89.70000000000005px;letter-spacing:0.25px;text-align:center;overflow:hidden;"><span style="-webkit-text-stroke:0.15px currentColor">常州宿舍</span></div>
<div class="a" style="left:619.7px;top:367.25px;height:18.0px;line-height:18.0px;font-size:11.25px;color:#333;font-weight:normal;width:45.69999999999993px;letter-spacing:0.25px;text-align:center;overflow:hidden;">A<span style="-webkit-text-stroke:0.15px currentColor">栋</span></div>
<div class="a" style="left:666.4px;top:367.25px;height:18.0px;line-height:18.0px;font-size:11.25px;color:#333;font-weight:normal;width:47.0px;letter-spacing:0px;text-align:center;overflow:hidden;">--</div>
<div class="a" style="left:714.4px;top:367.25px;height:18.0px;line-height:18.0px;font-size:11.25px;color:#333;font-weight:normal;width:38.200000000000045px;letter-spacing:0.25px;text-align:center;overflow:hidden;">2<span style="-webkit-text-stroke:0.15px currentColor">层</span></div>
<div class="a" style="left:753.6px;top:367.25px;height:18.0px;line-height:18.0px;font-size:11.25px;color:#333;font-weight:normal;width:47.0px;letter-spacing:0px;text-align:center;overflow:hidden;">A206</div>
<div class="a" style="left:801.6px;top:367.25px;height:18.0px;line-height:18.0px;font-size:11.25px;color:#333;font-weight:normal;width:54.69999999999993px;letter-spacing:0.25px;text-align:center;overflow:hidden;"><span style="-webkit-text-stroke:0.15px currentColor">已启用</span></div>
<div class="a" style="left:857.3px;top:367.25px;height:18.0px;line-height:18.0px;font-size:11.25px;color:#333;font-weight:normal;width:72.30000000000007px;letter-spacing:0px;text-align:center;overflow:hidden;">0.00</div>
<div class="r" style="left:216.6px;top:418.50px;width:713.0px;height:1px;background:#e8e8e8"></div>
<div class="r" style="left:252px;top:397.55px;width:14.4px;height:14.4px;border:1px solid #777;border-radius:2.5px;background:#fff"></div>
<div class="a" style="left:215.6px;top:394.75px;height:20.0px;line-height:20.0px;font-size:12.5px;color:#555;font-weight:normal;width:26.80000000000001px;text-align:center;">9</div>
<div class="a" style="left:277.5px;top:395.75px;height:18.0px;line-height:18.0px;font-size:11.25px;color:#23527c;font-weight:normal;width:78.10000000000002px;letter-spacing:0.25px;text-align:center;overflow:hidden;"><span style="-webkit-text-stroke:0.15px currentColor">充值</span></div>
<div class="a" style="left:356.6px;top:395.75px;height:18.0px;line-height:18.0px;font-size:11.25px;color:#333;font-weight:normal;width:63.099999999999966px;letter-spacing:0.25px;text-align:center;overflow:hidden;"><span style="-webkit-text-stroke:0.15px currentColor">汇川</span></div>
<div class="a" style="left:421.9px;top:395.75px;height:18.0px;line-height:18.0px;font-size:11.25px;color:#333;font-weight:normal;width:106.10000000000001px;letter-spacing:0.3px;overflow:hidden;"><span style="-webkit-text-stroke:0.15px currentColor">常州基地（联合动力）</span></div>
<div class="a" style="left:529px;top:395.75px;height:18.0px;line-height:18.0px;font-size:11.25px;color:#333;font-weight:normal;width:89.70000000000005px;letter-spacing:0.25px;text-align:center;overflow:hidden;"><span style="-webkit-text-stroke:0.15px currentColor">常州宿舍</span></div>
<div class="a" style="left:619.7px;top:395.75px;height:18.0px;line-height:18.0px;font-size:11.25px;color:#333;font-weight:normal;width:45.69999999999993px;letter-spacing:0.25px;text-align:center;overflow:hidden;">A<span style="-webkit-text-stroke:0.15px currentColor">栋</span></div>
<div class="a" style="left:666.4px;top:395.75px;height:18.0px;line-height:18.0px;font-size:11.25px;color:#333;font-weight:normal;width:47.0px;letter-spacing:0px;text-align:center;overflow:hidden;">--</div>
<div class="a" style="left:714.4px;top:395.75px;height:18.0px;line-height:18.0px;font-size:11.25px;color:#333;font-weight:normal;width:38.200000000000045px;letter-spacing:0.25px;text-align:center;overflow:hidden;">2<span style="-webkit-text-stroke:0.15px currentColor">层</span></div>
<div class="a" style="left:753.6px;top:395.75px;height:18.0px;line-height:18.0px;font-size:11.25px;color:#333;font-weight:normal;width:47.0px;letter-spacing:0px;text-align:center;overflow:hidden;">A207</div>
<div class="a" style="left:801.6px;top:395.75px;height:18.0px;line-height:18.0px;font-size:11.25px;color:#333;font-weight:normal;width:54.69999999999993px;letter-spacing:0.25px;text-align:center;overflow:hidden;"><span style="-webkit-text-stroke:0.15px currentColor">已启用</span></div>
<div class="a" style="left:857.3px;top:395.75px;height:18.0px;line-height:18.0px;font-size:11.25px;color:#333;font-weight:normal;width:72.30000000000007px;letter-spacing:0px;text-align:center;overflow:hidden;">0.00</div>
<div class="r" style="left:252px;top:426.05px;width:14.4px;height:14.4px;border:1px solid #777;border-radius:2.5px;background:#fff"></div>
<div class="r" style="left:240.9px;top:162.6px;width:1px;height:264.4px;background:#e6e6e6"></div>
<div class="r" style="left:276.0px;top:162.6px;width:1px;height:264.4px;background:#e6e6e6"></div>
<div class="r" style="left:355.1px;top:162.6px;width:1px;height:264.4px;background:#e6e6e6"></div>
<div class="r" style="left:419.2px;top:162.6px;width:1px;height:264.4px;background:#e6e6e6"></div>
<div class="r" style="left:527.5px;top:162.6px;width:1px;height:264.4px;background:#e6e6e6"></div>
<div class="r" style="left:618.2px;top:162.6px;width:1px;height:264.4px;background:#e6e6e6"></div>
<div class="r" style="left:664.9px;top:162.6px;width:1px;height:264.4px;background:#e6e6e6"></div>
<div class="r" style="left:712.9px;top:162.6px;width:1px;height:264.4px;background:#e6e6e6"></div>
<div class="r" style="left:752.1px;top:162.6px;width:1px;height:264.4px;background:#e6e6e6"></div>
<div class="r" style="left:800.1px;top:162.6px;width:1px;height:264.4px;background:#e6e6e6"></div>
<div class="r" style="left:855.8px;top:162.6px;width:1px;height:264.4px;background:#e6e6e6"></div>
<div class="r" style="left:929.1px;top:162.6px;width:1px;height:264.4px;background:#e6e6e6"></div>
<div class="r" style="left:215.6px;top:427px;width:1006.4px;height:22.6px;background:#f2f2f2;border-top:1px solid #c7dcea;border-left:1px solid #e6e6e6;border-bottom:1px solid #e3e3e3"></div>
<svg style="position:absolute;left:637.0px;top:435.8px;overflow:visible" width="8.2" height="5" viewBox="0 0 8.2 5"><rect x="0" y="0" width="1.2" height="5" fill="#cfdce7"/><path d="M8.2 0 L2.4 2.5 L8.2 5 Z" fill="#cfdce7"/></svg>
<svg style="position:absolute;left:653.2px;top:435.8px;overflow:visible" width="9.2" height="5" viewBox="0 0 9.2 5"><path d="M4.6 0 L0 2.5 L4.6 5 Z M9.2 0 L4.6 2.5 L9.2 5 Z" fill="#cfdce7"/></svg>
<div class="r" style="left:669px;top:431px;width:1px;height:14px;background:#d8d8d8"></div>
<div class="a" style="left:676.8px;top:429.10px;height:19.2px;line-height:19.2px;font-size:12.0px;color:#555;font-weight:normal;">[0] 共 3 页</div>
<div class="r" style="left:734.3px;top:431px;width:1px;height:14px;background:#d8d8d8"></div>
<svg style="position:absolute;left:741px;top:436.4px;overflow:visible" width="9.6" height="4.8" viewBox="0 0 9.6 4.8"><path d="M0 0 L4.8 2.4 L0 4.8 Z M4.8 0 L9.6 2.4 L4.8 4.8 Z" fill="#7ab6e3"/></svg>
<svg style="position:absolute;left:758.6px;top:436.4px;overflow:visible" width="8.7" height="4.8" viewBox="0 0 8.7 4.8"><path d="M0 0 L5.8 2.4 L0 4.8 Z" fill="#7ab6e3"/><rect x="7.4" y="0" width="1.2" height="4.8" fill="#7ab6e3"/></svg>
<div class="r" style="left:772.4px;top:430.3px;width:54.5px;height:15.4px;border:1px solid #767676;border-radius:2.5px;background:#fff"></div>
<div class="a" style="left:780px;top:429.12px;height:18.56px;line-height:18.56px;font-size:11.6px;color:#222;font-weight:normal;">100</div>
<svg style="position:absolute;left:813.8px;top:435.2px;overflow:visible" width="8.6" height="5.4" viewBox="0 0 8.6 5.4"><path d="M0.9 0.9 L4.3 4.3 L7.7 0.9" fill="none" stroke="#111" stroke-width="2"/></svg>
<div class="a" style="left:1132.4px;top:429.72px;height:19.36px;line-height:19.36px;font-size:12.1px;color:#555;font-weight:normal;">[0] - 100</div>
<div class="a" style="left:1188.5px;top:429.72px;height:19.36px;line-height:19.36px;font-size:12.1px;color:#555;font-weight:normal;">共 226</div>
<div class="r" style="left:215.4px;top:460px;width:1007px;height:225px;background:#fff;border-left:1px solid #e3e6e8"></div>
<div class="r" style="left:215.6px;top:460px;width:1007px;height:23.5px;background:#3eaee0;border-radius:3px 0 0 0"></div>
<div class="a" style="left:219.9px;top:462.80px;height:18.0px;line-height:18.0px;font-size:11.25px;color:#fff;font-weight:bold;letter-spacing:-0.2px;-webkit-text-stroke:0.25px #fff;">子房间列表</div>
<div class="r" style="left:215.4px;top:483.5px;width:1007px;height:32px;background:#f2f2f2;border-left:1px solid #e6e6e6"></div>
<div class="r" style="left:215.4px;top:514.5px;width:1007px;height:1.2px;background:#cfe0ec"></div>
<div class="r" style="left:241.2px;top:484px;width:1px;height:30.5px;background:#cfe0ec"></div>
<div class="r" style="left:349.2px;top:484px;width:1px;height:30.5px;background:#cfe0ec"></div>
<div class="r" style="left:405.1px;top:484px;width:1px;height:30.5px;background:#cfe0ec"></div>
<div class="r" style="left:479.4px;top:484px;width:1px;height:30.5px;background:#cfe0ec"></div>
<div class="r" style="left:526.2px;top:484px;width:1px;height:30.5px;background:#cfe0ec"></div>
<div class="r" style="left:583.2px;top:484px;width:1px;height:30.5px;background:#cfe0ec"></div>
<div class="r" style="left:630.0px;top:484px;width:1px;height:30.5px;background:#cfe0ec"></div>
<div class="a" style="left:241.2px;top:488.84px;height:19.52px;line-height:19.52px;font-size:12.2px;color:#555;font-weight:normal;width:106.5px;letter-spacing:0.25px;text-align:center;overflow:hidden;"><span style="-webkit-text-stroke:0.12px currentColor">房间名称</span></div>
<div class="a" style="left:349.2px;top:488.84px;height:19.52px;line-height:19.52px;font-size:12.2px;color:#555;font-weight:normal;width:54.400000000000034px;letter-spacing:0.25px;text-align:center;overflow:hidden;"><span style="-webkit-text-stroke:0.12px currentColor">房间状态</span></div>
<div class="a" style="left:405.1px;top:488.84px;height:19.52px;line-height:19.52px;font-size:12.2px;color:#555;font-weight:normal;width:72.79999999999995px;letter-spacing:0.25px;text-align:center;overflow:hidden;"><span style="-webkit-text-stroke:0.12px currentColor">房间类型</span></div>
<div class="a" style="left:479.4px;top:488.84px;height:19.52px;line-height:19.52px;font-size:12.2px;color:#555;font-weight:normal;width:45.30000000000007px;letter-spacing:0.25px;text-align:center;overflow:hidden;"><span style="-webkit-text-stroke:0.12px currentColor">入住性别</span></div>
<div class="a" style="left:526.2px;top:488.84px;height:19.52px;line-height:19.52px;font-size:12.2px;color:#555;font-weight:normal;width:55.5px;letter-spacing:0.25px;text-align:center;overflow:hidden;"><span style="-webkit-text-stroke:0.12px currentColor">床位数</span></div>
<div class="a" style="left:583.2px;top:488.84px;height:19.52px;line-height:19.52px;font-size:12.2px;color:#555;font-weight:normal;width:45.299999999999955px;letter-spacing:0.25px;text-align:center;overflow:hidden;"><span style="-webkit-text-stroke:0.12px currentColor">已住人数</span></div>
</body></html>
